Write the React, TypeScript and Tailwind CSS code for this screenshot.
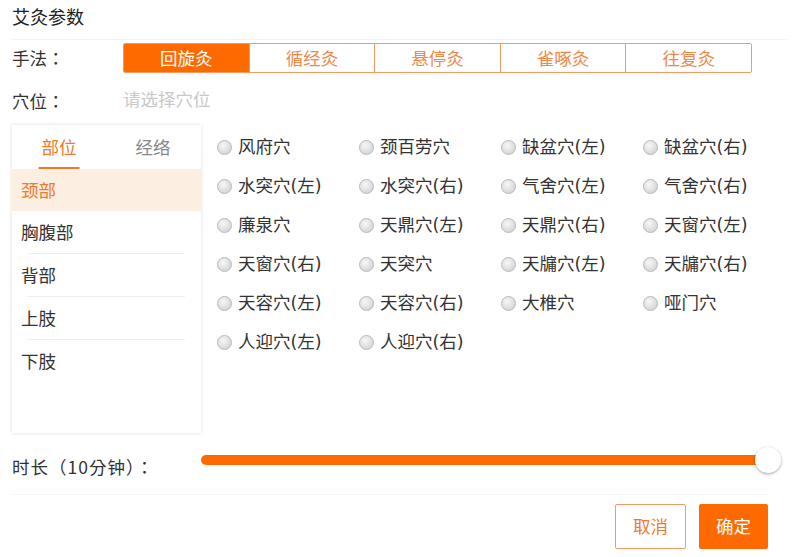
import { useState } from "react";

const methods = ["回旋灸", "循经灸", "悬停灸", "雀啄灸", "往复灸"];
const parts = ["颈部", "胸腹部", "背部", "上肢", "下肢"];
const points = [
  "风府穴",
  "颈百劳穴",
  "缺盆穴(左)",
  "缺盆穴(右)",
  "水突穴(左)",
  "水突穴(右)",
  "气舍穴(左)",
  "气舍穴(右)",
  "廉泉穴",
  "天鼎穴(左)",
  "天鼎穴(右)",
  "天窗穴(左)",
  "天窗穴(右)",
  "天突穴",
  "天牖穴(左)",
  "天牖穴(右)",
  "天容穴(左)",
  "天容穴(右)",
  "大椎穴",
  "哑门穴",
  "人迎穴(左)",
  "人迎穴(右)",
];

function Radio({ label }: { label: string }) {
  return (
    <label className="flex items-center h-[39px] cursor-pointer">
      <span className="w-[15px] h-[15px] rounded-full border border-[#b9b9b9] bg-[radial-gradient(circle_at_40%_35%,#f7f7f7,#cbcbcb)] shrink-0" />
      <span className="ml-[6px] text-[17.5px] text-[#333] font-['DejaVu_Sans','Noto_Sans_CJK_SC',sans-serif]">
        {label}
      </span>
    </label>
  );
}

export default function App() {
  const [method, setMethod] = useState(0);
  const [part, setPart] = useState(0);
  const [tab, setTab] = useState(0);

  return (
    <div className="w-[800px] h-[557px] bg-white overflow-hidden font-['Noto_Sans_CJK_SC','Noto_Sans',sans-serif] text-[#333]">
      {/* Header */}
      <div className="ml-[12px] mr-[13px] h-[40px] border-b border-[#f2f2f2]">
        <div className="text-[18px] leading-[24px] pt-[4px] text-[#222]">
          艾灸参数
        </div>
      </div>

      <div className="px-[12px]">
        {/* 手法 */}
        <div className="flex items-center mt-[3px] h-[30px]">
          <div className="w-[111px] text-[17.5px] font-['Noto_Sans_CJK_TC',sans-serif]">
            手法：
          </div>
          <div className="flex w-[629px] h-[30px] border border-[#f39c62] rounded-[2px] overflow-hidden">
            {methods.map((m, i) => (
              <button
                key={m}
                onClick={() => setMethod(i)}
                className={`flex-1 text-[17.5px] leading-none ${
                  i > 0 ? "border-l border-[#f39c62]" : ""
                } ${
                  method === i
                    ? "bg-[#ff6a00] text-white"
                    : "bg-white text-[#f0884a]"
                }`}
              >
                {m}
              </button>
            ))}
          </div>
        </div>

        {/* 穴位 */}
        <div className="flex items-center mt-[12px] h-[28px]">
          <div className="w-[111px] text-[17.5px] pt-[4px] font-['Noto_Sans_CJK_TC',sans-serif]">
            穴位：
          </div>
          <div className="text-[17.5px] text-[#c9c9c9]">请选择穴位</div>
        </div>

        {/* Picker */}
        <div className="flex mt-[12px] h-[308px]">
          <div className="w-[189px] h-full bg-white shadow-[0_0_4px_rgba(0,0,0,0.14)]">
            <div className="flex h-[44px]">
              {["部位", "经络"].map((t, i) => (
                <button
                  key={t}
                  onClick={() => setTab(i)}
                  className={`w-[94px] h-full relative text-[17.5px] ${
                    tab === i ? "text-[#f07a2c]" : "text-[#888]"
                  }`}
                >
                  {t}
                  {tab === i && (
                    <span className="absolute left-1/2 -translate-x-1/2 bottom-0 w-[41px] h-[2px] bg-[#f07a2c]" />
                  )}
                </button>
              ))}
            </div>
            <div>
              {parts.map((p, i) => (
                <div key={p} onClick={() => setPart(i)} className="cursor-pointer">
                  <div
                    className={`h-[42px] flex items-center pl-[9px] text-[17.5px] ${
                      part === i ? "bg-[#fdeee2] text-[#f07a2c]" : "text-[#333]"
                    }`}
                  >
                    {p}
                  </div>
                  {i > 0 && i < parts.length - 1 && (
                    <div className="mx-[16px] h-px bg-[#efefef]" />
                  )}
                </div>
              ))}
            </div>
          </div>

          <div className="ml-[16px] pt-[3px] grid grid-cols-[142px_142px_142px_142px] content-start">
            {points.map((p) => (
              <Radio key={p} label={p} />
            ))}
          </div>
        </div>

        {/* 时长 */}
        <div className="flex items-center mt-[8px] h-[38px]">
          <div className="w-[189px] text-[17.5px] pt-[14px] tracking-[1px] font-['Noto_Sans_CJK_TC',sans-serif]">
            时长（10分钟）：
          </div>
          <div className="relative w-[567px] h-[26px] flex items-center">
            <div className="w-full h-[10px] rounded-full bg-[#ff6a00]" />
            <span className="absolute right-[-13px] top-0 w-[26px] h-[26px] rounded-full bg-white shadow-[0_1px_3px_rgba(0,0,0,0.35)]" />
          </div>
        </div>

        {/* Footer */}
        <div className="mt-[15px] w-[756px] h-px bg-[#f3f3f3]" />
        <div className="flex justify-end w-[756px] mt-[9px] gap-[13px]">
          <button className="w-[71px] h-[45px] border border-[#f39c62] rounded-[2px] text-[17.5px] text-[#f07a2c] bg-white">
            取消
          </button>
          <button className="w-[69px] h-[45px] rounded-[2px] text-[17.5px] text-white bg-[#ff6a00]">
            确定
          </button>
        </div>
      </div>
    </div>
  );
}
